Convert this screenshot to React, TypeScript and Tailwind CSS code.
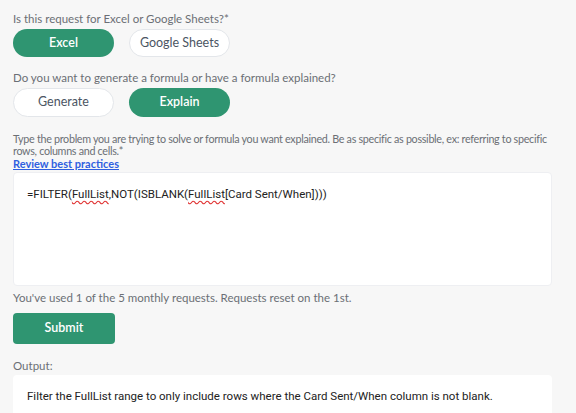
import React from "react";

const labelFont = { fontFamily: "Lato, 'Noto Sans', sans-serif" };
const bodyFont = { fontFamily: "Roboto, 'Noto Sans', sans-serif" };

export default function App() {
  return (
    <div className="w-[576px] h-[413px] overflow-hidden bg-[#f7f7f7] text-[#6b6f75]" style={labelFont}>
      <div className="pl-[13px] pr-[24px] pt-[12px] flex flex-col">
        <div className="text-[11.5px] leading-[14px] h-[14px]">Is this request for Excel or Google Sheets?*</div>
        <div className="flex gap-[15px] mt-[3px]">
          <button className="w-[101px] h-[28px] rounded-full bg-[#2f9571] text-white text-[12.5px] font-semibold">Excel</button>
          <button className="w-[101px] h-[28px] rounded-full bg-white border border-[#e3e6ea] text-[#4b5563] text-[12.5px]">Google Sheets</button>
        </div>
        <div className="text-[11.5px] leading-[14px] h-[14px] mt-[14px]">Do you want to generate a formula or have a formula explained?</div>
        <div className="flex gap-[15px] mt-[3px]">
          <button className="w-[101px] h-[29px] rounded-full bg-white border border-[#e3e6ea] text-[#4b5563] text-[12.5px]">Generate</button>
          <button className="w-[101px] h-[29px] rounded-full bg-[#2f9571] text-white text-[12.5px] font-semibold">Explain</button>
        </div>
        <div className="text-[10.75px] tracking-[-0.3px] leading-[12px] mt-[16px] w-[545px]">
          <span className="whitespace-nowrap">Type the problem you are trying to solve or formula you want explained. Be as specific as possible, ex: referring to specific</span>
          <br />
          rows, columns and cells.*
        </div>
        <a className="text-[11px] leading-[13px] text-[#2f5fe0] underline font-bold">Review best practices</a>
        <div className="mt-[2px] h-[114px] w-[539px] bg-white rounded-[4px] border border-[#eeeff2] px-[13px] pt-[13px] text-[11.5px] text-[#222]" style={bodyFont}>
          =FILTER(
          <span className="underline decoration-wavy decoration-[#e03030] underline-offset-2">FullList</span>
          ,NOT(ISBLANK(
          <span className="underline decoration-wavy decoration-[#e03030] underline-offset-2">FullList</span>
          [Card Sent/When])))
        </div>
        <div className="text-[11.5px] leading-[14px] mt-[5px]">You've used 1 of the 5 monthly requests. Requests reset on the 1st.</div>
        <button className="mt-[8px] w-[102px] h-[31px] rounded-[4px] bg-[#2f9571] text-white text-[12.5px] font-semibold">Submit</button>
        <div className="text-[11.5px] leading-[14px] mt-[15px]">Output:</div>
        <div className="mt-[2px] h-[60px] w-[539px] bg-white rounded-[4px] px-[14px] pt-[13px] text-[11.5px] text-[#222]" style={bodyFont}>
          Filter the FullList range to only include rows where the Card Sent/When column is not blank.
        </div>
      </div>
    </div>
  );
}
